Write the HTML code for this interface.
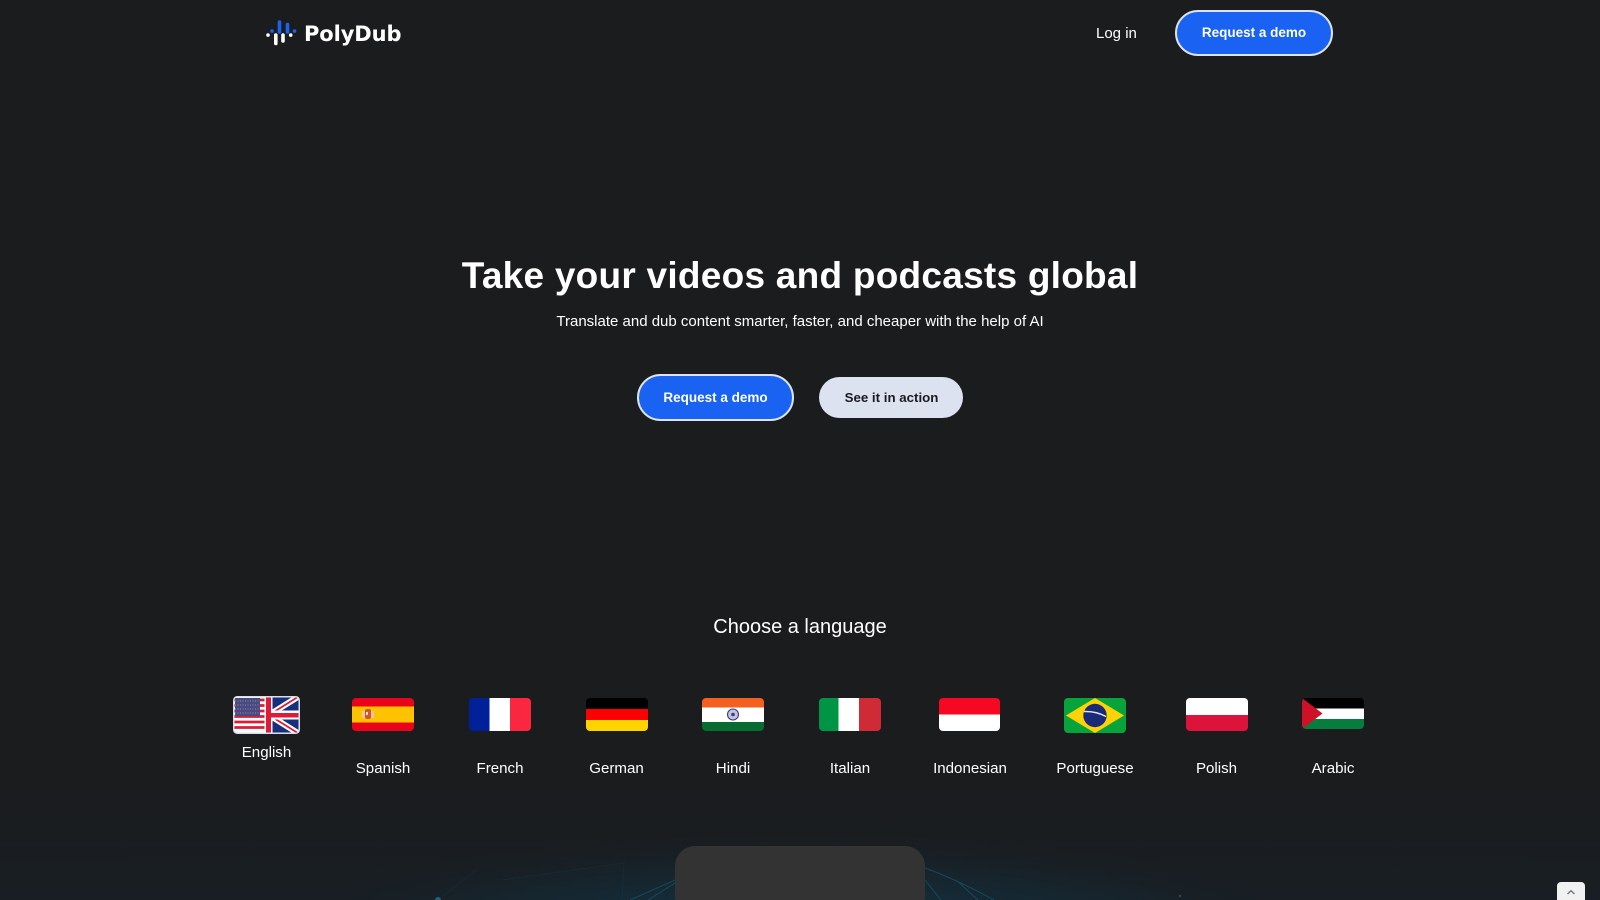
<!DOCTYPE html>
<html lang="en"><head><meta charset="utf-8"><title>PolyDub</title>
<style>
*{box-sizing:border-box;margin:0;padding:0}
html,body{width:1600px;height:900px;overflow:hidden;background:#1b1c1e;color:#fff;font-family:"Liberation Sans",Arial,sans-serif}
#w{position:relative;width:1600px;height:900px;overflow:hidden;background:#1b1c1e}
.a{position:absolute;white-space:nowrap}
.c{transform:translateX(-50%)}
.btn{position:absolute;border-radius:24px;background:#1a62f2;border:2px solid #dde3f0;color:#fff;font-weight:700;font-size:13.5px;display:flex;align-items:center;justify-content:center}
.lb{position:absolute;font-size:15.1px;line-height:18px;transform:translateX(-50%);white-space:nowrap}
svg{position:absolute;display:block}
</style></head><body><div id="w">
<svg style="left:0;top:780px" width="1600" height="120" viewBox="0 780 1600 120">
<defs>
<radialGradient id="g" cx="800" cy="925" r="560" gradientUnits="userSpaceOnUse" gradientTransform="translate(0 925) scale(1 .17) translate(0 -925)">
<stop offset="0" stop-color="#0f4a60" stop-opacity=".65"/><stop offset=".6" stop-color="#123040" stop-opacity=".35"/><stop offset="1" stop-color="#1b1c1e" stop-opacity="0"/></radialGradient>
<linearGradient id="b" x1="0" y1="0" x2="0" y2="1"><stop offset="0" stop-color="#1b1c1e"/><stop offset="1" stop-color="#181e23"/></linearGradient>
</defs>
<rect x="0" y="780" width="1600" height="120" fill="url(#b)"/>
<rect x="0" y="780" width="1600" height="120" fill="url(#g)"/>
<g stroke="#14586c" stroke-width="1" fill="none" opacity=".7">
<path d="M630 900L675 880M648 900L675 883"/>
<path d="M925 868Q958 880 994 900M925 880L941 900M956 880L978 900"/>
<path d="M502 880L624 863L622 900M476 870L440 898" opacity=".2"/>
</g>
<circle cx="438" cy="900" r="3" fill="#2b7d98" opacity=".7"/>
<circle cx="1180" cy="896" r="1.2" fill="#3a4650"/>
</svg>
<div class="a" style="left:675px;top:846px;width:250px;height:70px;border-radius:20px;background:#333"></div>
<div class="a" style="left:1557px;top:882px;width:28px;height:30px;border-radius:4px;background:#f1f1f1"></div>
<svg style="left:1566px;top:889px" width="10" height="6" viewBox="0 0 10 6"><path d="M1.500 5L5 1.700 8.500 5" fill="none" stroke="#777" stroke-width="1.400"/></svg>

<svg style="left:264px;top:16px" width="36" height="32" viewBox="264 16 36 32" stroke-linecap="round" fill="none" stroke-width="3.600">
<g stroke="#1a62f2"><path d="M272 31v.1M279.500 22v10M287.500 24.500v7.500M294.500 31v.1"/></g>
<g stroke="#fff"><path d="M268 35v.1M275.800 35v8.500M283 35v6M290.700 35v.1"/></g>
</svg>
<div class="a" style="left:304px;top:21px;font-family:'DejaVu Sans',sans-serif;font-size:21px;line-height:27px;font-weight:700;letter-spacing:-.1px">PolyDub</div>
<div class="a" style="left:1096px;top:25px;font-size:15px;line-height:18px">Log in</div>
<div class="btn" style="left:1175px;top:10px;width:158px;height:46px;padding-bottom:1px">Request a demo</div>

<h1 class="a c" style="left:800px;top:253px;font-size:37px;line-height:46px;font-weight:700;letter-spacing:.25px">Take your videos and podcasts global</h1>
<div class="a c" style="left:800px;top:312px;font-size:15px;line-height:19px">Translate and dub content smarter, faster, and cheaper with the help of AI</div>
<div class="btn" style="left:637px;top:374px;width:157px;height:47px;padding-bottom:1px">Request a demo</div>
<div class="btn" style="left:819px;top:377px;width:144px;height:41px;background:#dce2f0;border:0;color:#1b1c1e;padding:0 0 1px 1px;font-size:13.3px">See it in action</div>
<div class="a c" style="left:800px;top:615px;font-size:20px;line-height:24px">Choose a language</div>

<svg style="left:233px;top:696px" width="67" height="38" viewBox="0 0 67 38">
<defs><clipPath id="e"><rect x="1" y="1" width="65" height="36" rx="3"/></clipPath></defs>
<g clip-path="url(#e)">
<rect width="67" height="38" fill="#fff"/>
<path d="M1 4h33M1 9.500h33M1 15h33M1 20.500h33M1 26h33M1 31.500h33" stroke="#dc1c34" stroke-width="2.700"/>
<rect x="2" y="2" width="25" height="18" fill="#4a4a80"/>
<path d="M2 5h25M2 9h25M2 13h25M2 17h25" stroke="#8f8fb5" stroke-width="1" stroke-dasharray="1 1.500"/>
<rect x="38" y="1" width="29" height="37" fill="#17307c"/>
<path d="M36 19L68 -1M36 19L68 39" stroke="#fff" stroke-width="6"/>
<path d="M36 19L68 -1M36 19L68 39" stroke="#dc1c34" stroke-width="1.800"/>
<rect x="38" y="14.500" width="29" height="9" fill="#fff"/>
<rect x="31.500" y="0" width="1.500" height="38" fill="#fff"/>
<rect x="38" y="0" width="1.500" height="38" fill="#fff"/>
<rect x="33" y="0" width="5" height="38" fill="#e01b36"/>
<rect x="33" y="17" width="34" height="4.500" fill="#e01b36"/>
</g>
<rect x=".75" y=".75" width="65.500" height="36.500" rx="3.500" fill="none" stroke="#d9dfe8" stroke-width="1.500"/>
</svg>

<svg style="left:352px;top:698px" width="62" height="33" viewBox="0 0 62 33">
<defs><clipPath id="s"><rect width="62" height="33" rx="4"/></clipPath></defs>
<g clip-path="url(#s)"><rect width="62" height="33" fill="#e8051b"/><rect y="8.500" width="62" height="16" fill="#fdc300"/>
<rect x="10" y="13" width="3" height="7" fill="#e9c6a0"/><rect x="19" y="13" width="3" height="7" fill="#e9c6a0"/><rect x="13" y="11" width="6" height="10" rx="2" fill="#d0552a"/><rect x="14" y="14" width="2" height="3" fill="#f0e0c0"/></g></svg>

<svg style="left:469px;top:698px" width="62" height="33" viewBox="0 0 62 33">
<defs><clipPath id="f"><rect width="62" height="33" rx="4"/></clipPath></defs>
<g clip-path="url(#f)"><rect width="21" height="33" fill="#00209a"/><rect x="20.500" width="21" height="33" fill="#fff"/><rect x="41" width="21" height="33" fill="#fb2640"/></g></svg>

<svg style="left:586px;top:698px" width="62" height="33" viewBox="0 0 62 33">
<defs><clipPath id="d"><rect width="62" height="33" rx="4"/></clipPath></defs>
<g clip-path="url(#d)"><rect width="62" height="11" fill="#000"/><rect y="11" width="62" height="11" fill="#f00"/><rect y="22" width="62" height="11" fill="#ffd300"/></g></svg>

<svg style="left:702px;top:698px" width="62" height="33" viewBox="0 0 62 33">
<defs><clipPath id="h"><rect width="62" height="33" rx="4"/></clipPath></defs>
<g clip-path="url(#h)"><rect width="62" height="9.500" fill="#f4601f"/><rect y="9.500" width="62" height="14.500" fill="#fff"/><rect y="24" width="62" height="9" fill="#086b2f"/>
<circle cx="31" cy="16.500" r="5.500" fill="#c4c4dc" stroke="#3c3c88" stroke-width="1.100"/><circle cx="31" cy="16.500" r="1.800" fill="#3c3c88"/></g></svg>

<svg style="left:819px;top:698px" width="62" height="33" viewBox="0 0 62 33">
<defs><clipPath id="i"><rect width="62" height="33" rx="4"/></clipPath></defs>
<g clip-path="url(#i)"><rect width="20" height="33" fill="#009445"/><rect x="19.500" width="21" height="33" fill="#fff"/><rect x="40" width="22" height="33" fill="#ce2b37"/></g></svg>

<svg style="left:939px;top:698px" width="62" height="33" viewBox="0 0 62 33">
<defs><clipPath id="n"><rect width="61" height="33" rx="4"/></clipPath></defs>
<g clip-path="url(#n)"><rect width="62" height="16.500" fill="#f60823"/><rect y="16.500" width="62" height="16.500" fill="#fff"/></g></svg>

<svg style="left:1064px;top:698px" width="62" height="35" viewBox="0 0 62 35">
<rect y="0" width="62" height="35" rx="4" fill="#08a43b"/>
<path d="M31 0L60 17.500 31 35 2 17.500Z" fill="#fdd306"/>
<circle cx="31" cy="17.500" r="11.700" fill="#1a2a78"/>
<path d="M20 13.500Q32 13 42 18.500" stroke="#dfe8ea" stroke-width="1.500" fill="none"/>
</svg>

<svg style="left:1186px;top:698px" width="62" height="33" viewBox="0 0 62 33">
<defs><clipPath id="p"><rect width="62" height="33" rx="4"/></clipPath></defs>
<g clip-path="url(#p)"><rect width="62" height="17" fill="#fff"/><rect y="17" width="62" height="16" fill="#dc143c"/></g></svg>

<svg style="left:1302px;top:698px" width="62" height="31" viewBox="0 0 62 31">
<defs><clipPath id="r"><rect width="62" height="31" rx="4"/></clipPath></defs>
<g clip-path="url(#r)"><rect width="62" height="10.500" fill="#000"/><rect y="10.500" width="62" height="10.500" fill="#fff"/><rect y="21" width="62" height="10" fill="#077c3f"/><path d="M0 0L20.500 15.500 0 31Z" fill="#ce1126"/></g></svg>

<div class="lb" style="left:266.500px;top:744px">English</div>
<div class="lb" style="left:383px;top:760px">Spanish</div>
<div class="lb" style="left:500px;top:760px">French</div>
<div class="lb" style="left:616.500px;top:760px">German</div>
<div class="lb" style="left:733px;top:760px">Hindi</div>
<div class="lb" style="left:850px;top:760px">Italian</div>
<div class="lb" style="left:970px;top:760px">Indonesian</div>
<div class="lb" style="left:1095px;top:760px">Portuguese</div>
<div class="lb" style="left:1216.500px;top:760px">Polish</div>
<div class="lb" style="left:1333px;top:760px">Arabic</div>
</div></body></html>
